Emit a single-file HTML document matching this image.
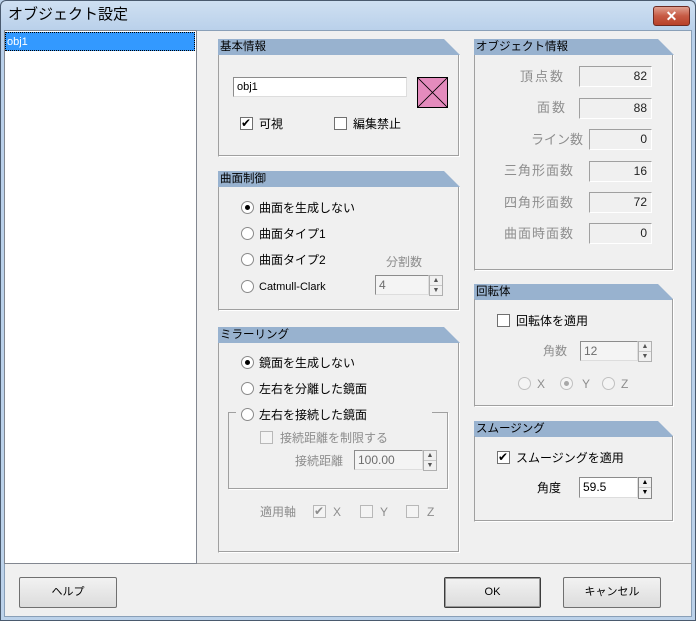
<!DOCTYPE html>
<html><head><meta charset="utf-8"><style>
*{margin:0;padding:0;box-sizing:border-box}
body{width:696px;height:621px;overflow:hidden;position:relative;background:#bcd2ea;font-family:"Liberation Sans","Noto Sans CJK JP",sans-serif;font-size:12px;color:#000}
.a{position:absolute}
.t{position:absolute;white-space:nowrap;line-height:14px}
.g{color:#8d8d8d}
.hdr{position:absolute;height:16px;background:#98b2cf;clip-path:polygon(0 0,calc(100% - 16px) 0,100% 100%,0 100%);padding-left:2px;line-height:16px;font-size:11.5px}
.box{position:absolute;border-left:1px solid #a0a0a0;border-bottom:1px solid #fff;border-right:1px solid #fff;box-shadow:inset 0 -1px 0 #a0a0a0, inset -1px 0 0 #a0a0a0}
.cb{position:absolute;width:13px;height:13px;background:#fff;border:1px solid #707070}
.cb.d{background:#f4f4f4;border-color:#b8b8b8}
.rd{position:absolute;width:13px;height:13px;border-radius:50%;background:#fff;border:1px solid #8a8a8a}
.rd.on::after{content:"";position:absolute;left:3px;top:3px;width:5px;height:5px;border-radius:50%;background:#000}
.rd.d{border-color:#c0c0c0;background:#f4f4f4}
.rd.d.on::after{background:#a8a8a8}
.in{position:absolute;background:#fff;border:1px solid #8c8c8c;border-right-color:#ddd;border-bottom-color:#ddd;padding-left:3px;line-height:18px;font-size:12px}
.in.d{background:#f4f4f4;color:#6d6d6d}
.ro{position:absolute;border:1px solid #a0a0a0;border-right-color:#fff;border-bottom-color:#fff;text-align:right;padding-right:4px;line-height:19px;color:#222}
.sp{position:absolute;width:14px;border:1px solid #b0b0b0;background:#f0f0f0}
.sp div{height:50%;border-bottom:1px solid #c8c8c8;font-size:7px;text-align:center;line-height:9px;color:#555}
.btn{position:absolute;height:31px;border:1px solid #707070;background:linear-gradient(#f2f2f2,#dcdcdc);border-radius:2px;text-align:center;line-height:29px;font-size:11px}
</style></head><body>
<div class="a" style="left:0;top:0;width:696px;height:621px;border:1px solid #4a5a6e;border-radius:6px 6px 0 0;background:linear-gradient(#cfe0f2,#b9d0ea 30px,#bcd2ea)"></div>
<div class="t" style="left:8px;top:6px;font-size:15px;line-height:18px">オブジェクト設定</div>
<div class="a" style="left:653px;top:6px;width:37px;height:20px;border-radius:3px;border:1px solid #6d2a22;background:linear-gradient(#e0a090,#c75a44 50%,#b8412a);color:#fff;font-weight:bold;text-align:center;line-height:18px;font-size:14px">✕</div>
<div class="a" style="left:4px;top:30px;width:688px;height:587px;background:#f0f0f0;border:1px solid #8aa0b8"></div>
<div class="a" style="left:4px;top:30px;width:193px;height:534px;background:#fff;border:1px solid #828790"></div>
<div class="a" style="left:5px;top:32px;width:190px;height:19px;background:#3399ff;outline:1px dotted #000;outline-offset:-1px"></div>
<div class="t" style="left:7px;top:35px;color:#fff;font-size:11px">obj1</div>
<div class="a" style="left:197px;top:563px;width:495px;height:1px;background:#a0a0a0"></div>

<div class="hdr" style="left:218px;top:39px;width:242px">基本情報</div>
<div class="box" style="left:218px;top:55px;width:242px;height:102px"></div>
<div class="in" style="left:233px;top:77px;width:174px;height:20px;font-size:11px">obj1</div>
<svg class="a" style="left:417px;top:77px" width="31" height="31"><rect x="0.5" y="0.5" width="30" height="30" fill="#e48bbd" stroke="#000"/><path d="M0 0L31 31M31 0L0 31" stroke="#000" stroke-width="0.8"/></svg>
<div class="cb" style="left:240px;top:117px"></div><div class="t" style="left:241px;top:116px;font-size:12px">✔</div>
<div class="t" style="left:259px;top:117px">可視</div>
<div class="cb" style="left:334px;top:117px"></div>
<div class="t" style="left:353px;top:117px">編集禁止</div>

<div class="hdr" style="left:218px;top:171px;width:242px">曲面制御</div>
<div class="box" style="left:218px;top:187px;width:242px;height:124px"></div>
<div class="rd on" style="left:241px;top:201px"></div><div class="t" style="left:259px;top:201px">曲面を生成しない</div>
<div class="rd" style="left:241px;top:227px"></div><div class="t" style="left:259px;top:227px">曲面タイプ1</div>
<div class="rd" style="left:241px;top:253px"></div><div class="t" style="left:259px;top:253px">曲面タイプ2</div>
<div class="rd" style="left:241px;top:280px"></div><div class="t" style="left:259px;top:280px;font-size:11px">Catmull-Clark</div>
<div class="t g" style="left:386px;top:255px">分割数</div>
<div class="in d" style="left:375px;top:275px;width:54px;height:20px">4</div>
<div class="sp" style="left:429px;top:275px;height:21px"><div>▲</div><div style="border:0">▼</div></div>

<div class="hdr" style="left:218px;top:327px;width:242px">ミラーリング</div>
<div class="box" style="left:218px;top:343px;width:242px;height:210px"></div>
<div class="rd on" style="left:241px;top:356px"></div><div class="t" style="left:259px;top:356px">鏡面を生成しない</div>
<div class="rd" style="left:241px;top:382px"></div><div class="t" style="left:259px;top:382px">左右を分離した鏡面</div>
<div class="a" style="left:228px;top:412px;width:220px;height:77px;border:1px solid #a0a0a0;box-shadow:1px 1px 0 #fff"></div>
<div class="a" style="left:236px;top:405px;width:196px;height:16px;background:#f0f0f0"></div>
<div class="rd" style="left:241px;top:408px"></div><div class="t" style="left:259px;top:408px">左右を接続した鏡面</div>
<div class="cb d" style="left:260px;top:431px"></div><div class="t g" style="left:280px;top:431px">接続距離を制限する</div>
<div class="t g" style="left:295px;top:454px">接続距離</div>
<div class="in d" style="left:354px;top:450px;width:69px;height:20px">100.00</div>
<div class="sp" style="left:423px;top:450px;height:21px"><div>▲</div><div style="border:0">▼</div></div>
<div class="t g" style="left:260px;top:505px">適用軸</div>
<div class="cb d" style="left:313px;top:505px"></div><div class="t g" style="left:314px;top:504px">✔</div><div class="t g" style="left:333px;top:505px">X</div>
<div class="cb d" style="left:360px;top:505px"></div><div class="t g" style="left:380px;top:505px">Y</div>
<div class="cb d" style="left:406px;top:505px"></div><div class="t g" style="left:427px;top:505px">Z</div>

<div class="hdr" style="left:474px;top:39px;width:200px">オブジェクト情報</div>
<div class="box" style="left:474px;top:55px;width:200px;height:216px"></div>
<div class="t g" style="left:520px;top:70px;font-size:13px;letter-spacing:2px">頂点数</div><div class="ro" style="left:579px;top:66px;width:73px;height:21px">82</div>
<div class="t g" style="left:537px;top:101px;font-size:13px;letter-spacing:2px">面数</div><div class="ro" style="left:579px;top:98px;width:73px;height:21px">88</div>
<div class="t g" style="left:531px;top:133px;font-size:13px">ライン数</div><div class="ro" style="left:589px;top:129px;width:63px;height:21px">0</div>
<div class="t g" style="left:504px;top:164px;font-size:13px;letter-spacing:1px">三角形面数</div><div class="ro" style="left:589px;top:161px;width:63px;height:21px">16</div>
<div class="t g" style="left:504px;top:196px;font-size:13px;letter-spacing:1px">四角形面数</div><div class="ro" style="left:589px;top:192px;width:63px;height:21px">72</div>
<div class="t g" style="left:504px;top:227px;font-size:13px;letter-spacing:1px">曲面時面数</div><div class="ro" style="left:589px;top:223px;width:63px;height:21px">0</div>

<div class="hdr" style="left:474px;top:284px;width:200px">回転体</div>
<div class="box" style="left:474px;top:299px;width:200px;height:108px"></div>
<div class="cb" style="left:497px;top:314px"></div><div class="t" style="left:516px;top:314px">回転体を適用</div>
<div class="t g" style="left:543px;top:344px">角数</div>
<div class="in d" style="left:580px;top:341px;width:58px;height:20px">12</div>
<div class="sp" style="left:638px;top:341px;height:21px"><div>▲</div><div style="border:0">▼</div></div>
<div class="rd d" style="left:518px;top:377px"></div><div class="t g" style="left:537px;top:377px">X</div>
<div class="rd d on" style="left:560px;top:377px"></div><div class="t g" style="left:582px;top:377px">Y</div>
<div class="rd d" style="left:602px;top:377px"></div><div class="t g" style="left:621px;top:377px">Z</div>

<div class="hdr" style="left:474px;top:421px;width:200px">スムージング</div>
<div class="box" style="left:474px;top:436px;width:200px;height:86px"></div>
<div class="cb" style="left:497px;top:451px"></div><div class="t" style="left:498px;top:450px">✔</div>
<div class="t" style="left:516px;top:451px">スムージングを適用</div>
<div class="t" style="left:537px;top:481px">角度</div>
<div class="in" style="left:579px;top:477px;width:59px;height:21px">59.5</div>
<div class="sp" style="left:638px;top:477px;height:22px;border-color:#888"><div style="color:#000">▲</div><div style="border:0;color:#000">▼</div></div>

<div class="btn" style="left:19px;top:577px;width:98px">ヘルプ</div>
<div class="btn" style="left:444px;top:577px;width:97px;border-color:#3c3c3c;box-shadow:inset 0 0 0 1px #999">OK</div>
<div class="btn" style="left:563px;top:577px;width:98px">キャンセル</div>
</body></html>
